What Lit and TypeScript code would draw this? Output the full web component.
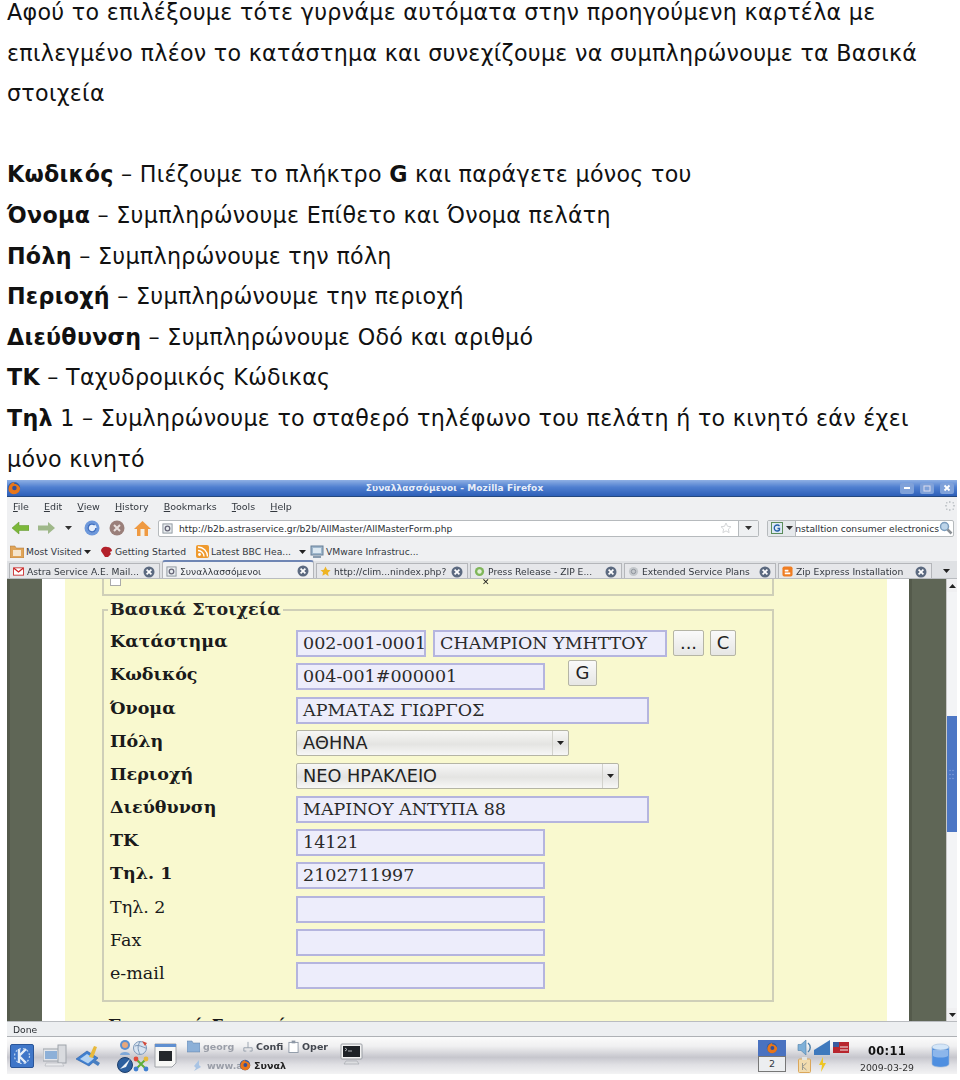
import { LitElement, html, css, svg } from "lit";
import { customElement } from "lit/decorators.js";

const closeIcon = html`<svg class="x" viewBox="0 0 12 12"><circle cx="6" cy="6" r="5.5" fill="#5c6a80"/><path d="M3.6 3.6l4.8 4.8M8.4 3.6l-4.8 4.8" stroke="#fff" stroke-width="1.7"/></svg>`;
const pageIcon = html`<svg class="fav" viewBox="0 0 12 12"><rect x="1" y="1" width="10" height="10" fill="#e8ecef" stroke="#8a929a"/><circle cx="6" cy="6" r="2.5" fill="none" stroke="#667" stroke-width="1.4"/></svg>`;
const firefox = (s: number) => html`<svg width=${s} height=${s} viewBox="0 0 16 16"><circle cx="8" cy="8" r="7" fill="#2a5aa8"/><path d="M2 11C1 6 4 2 9 1c-1 1-1 2-1 2 3 0 6 2 7 5 0 4-3 7-7 7-3 0-5-2-6-4z" fill="#e8761a"/><circle cx="8.5" cy="8" r="2.6" fill="#33509a"/></svg>`;

const tabs = [
  { w: 151, label: "Astra Service A.E. Mail...", fav: html`<svg class="fav" viewBox="0 0 12 12"><rect x=".5" y="2" width="11" height="8" fill="#fff" stroke="#c33"/><path d="M1 2.5l5 4 5-4" fill="none" stroke="#c22" stroke-width="1.4"/></svg>` },
  { w: 152, label: "Συναλλασσόμενοι", fav: pageIcon, active: true },
  { w: 152, label: "http://clim...nindex.php?", fav: html`<svg class="fav" viewBox="0 0 12 12"><path d="M6 .5l1.7 3.6 3.8.5-2.8 2.7.7 3.9L6 8.8l-3.4 1.9.7-3.9L.5 4.6l3.8-.5z" fill="#eeb422"/></svg>` },
  { w: 152, label: "Press Release - ZIP E...", fav: html`<svg class="fav" viewBox="0 0 12 12"><circle cx="6" cy="6" r="5" fill="#7fb65a"/><circle cx="6" cy="6" r="2.4" fill="#e4efd8"/></svg>` },
  { w: 152, label: "Extended Service Plans", fav: html`<svg class="fav" viewBox="0 0 12 12"><circle cx="6" cy="6" r="5" fill="#c4c8cc"/><circle cx="6" cy="6" r="2.4" fill="none" stroke="#8b9198"/></svg>` },
  { w: 154, label: "Zip Express Installation", fav: html`<svg class="fav" viewBox="0 0 12 12"><rect x=".5" y=".5" width="11" height="11" rx="2" fill="#ef7d22"/><path d="M3 7h6v2H3zM3 4h4v2H3z" fill="#fff"/></svg>` },
];

const fields: any[] = [
  { label: "Κατάστημα", bold: true, kind: "store" },
  { label: "Κωδικός", bold: true, kind: "code" },
  { label: "Όνομα", bold: true, kind: "input", value: "ΑΡΜΑΤΑΣ ΓΙΩΡΓΟΣ", w: 353 },
  { label: "Πόλη", bold: true, kind: "select", value: "ΑΘΗΝΑ", w: 273 },
  { label: "Περιοχή", bold: true, kind: "select", value: "ΝΕΟ ΗΡΑΚΛΕΙΟ", w: 323 },
  { label: "Διεύθυνση", bold: true, kind: "input", value: "ΜΑΡΙΝΟΥ ΑΝΤΥΠΑ 88", w: 353 },
  { label: "ΤΚ", bold: true, kind: "input", value: "14121", w: 249 },
  { label: "Τηλ. 1", bold: true, kind: "input", value: "2102711997", w: 249 },
  { label: "Τηλ. 2", kind: "input", value: "", w: 249 },
  { label: "Fax", kind: "input", value: "", w: 249 },
  { label: "e-mail", kind: "input", value: "", w: 249 },
];

@customElement("app-root")
export class AppRoot extends LitElement {
  static styles = css`
    :host { display: block; width: 960px; height: 1080px; background: #fff; overflow: hidden; font-family: "DejaVu Sans", sans-serif; color: #111; }
    .doc { margin: -8px 3px 0 7px; font-size: 22.2px; line-height: 40.6px; letter-spacing: .3px; }
    .doc p { margin: 0; }
    .doc .gap { height: 40.6px; }
    .win { margin: 1px 3px 0 7px; width: 950px; filter: blur(.5px); font-size: 9.2px; color: #33383f; }
    .title { height: 17px; background: linear-gradient(#8fb0e4, #4f7fd0 45%, #2d5fb8); display: flex; align-items: center; padding: 0 3px 0 0; color: #e8eef8; font-weight: 700; border-bottom: 1px solid #24487f; box-sizing: border-box; }
    .title .ttl { flex: 1; text-align: center; padding-right: 6px; letter-spacing: .1px; font-size: 9px; }
    .wbtn { width: 14px; height: 11px; margin-left: 6px; background: #7fa1d9; border-radius: 2px; display: flex; align-items: center; justify-content: center; }
    .chrome { background: #eff0f2; }
    .menu { height: 19px; display: flex; align-items: center; gap: 15px; padding-left: 6px; position: relative; font-size: 9.5px; }
    .menu span::first-letter { text-decoration: underline; }
    .loader { position: absolute; right: 2px; top: 4px; }
    .nav { height: 24px; display: flex; align-items: center; padding-left: 5px; }
    .nav svg { flex: none; }
    .url { margin-left: 7px; width: 601px; height: 17px; box-sizing: border-box; background: #fff; border: 1px solid #b6babd; border-radius: 2px; display: flex; align-items: center; gap: 6px; padding-left: 3px; color: #2a2e33; }
    .url .sp { flex: 1; }
    .url .drop { width: 19px; align-self: stretch; border-left: 1px solid #b6babd; background: #eef0f2; display: flex; align-items: center; justify-content: center; }
    .search { margin-left: 8px; width: 187px; height: 17px; box-sizing: border-box; background: #fff; border: 1px solid #b6babd; border-radius: 2px; display: flex; align-items: center; overflow: hidden; color: #2a2e33; white-space: nowrap; }
    .search .eng { width: 28px; flex: none; align-self: stretch; background: #e6e9ec; border-right: 1px solid #b6babd; display: flex; align-items: center; gap: 3px; padding-left: 3px; box-sizing: border-box; }
    .search .q { flex: 1; overflow: hidden; direction: rtl; text-align: left; }
    .marks { height: 21px; display: flex; align-items: center; padding: 2px 0 0 3px; box-sizing: border-box; white-space: nowrap; }
    .mark { display: flex; align-items: center; gap: 2px; flex: none; }
    .tabs { height: 18px; display: flex; align-items: flex-end; padding-left: 2px; gap: 2px; background: #dfe1e4; border-bottom: 1px solid #b9bcc0; box-sizing: border-box; position: relative; }
    .tab { box-sizing: border-box; height: 15px; display: flex; align-items: center; gap: 3px; padding: 1px 4px 0 3px; background: #e6e7ea; border: 1px solid #b4b6ba; border-bottom: 0; white-space: nowrap; overflow: hidden; flex: none; }
    .tab.active { height: 18px; padding-top: 2px; background: #f0f1f3; border-top: 2px solid #6f86b4; border-radius: 3px 3px 0 0; }
    .tab .lbl { flex: 1; overflow: hidden; }
    .fav { width: 11px; height: 11px; flex: none; }
    .x { width: 12px; height: 12px; flex: none; }
    .tabmore { margin-left: 9px; align-self: center; }
    .content { height: 442px; overflow: hidden; display: flex; }
    .dark { background: #5f6656; border-left: 3px solid #545a4b; box-sizing: border-box; flex: none; }
    .gutter { background: #fff; flex: none; }
    .page { flex: none; width: 822px; background: #f9f9cf; padding: 0 37px; box-sizing: border-box; font-family: "DejaVu Serif", serif; color: #1a1a1a; }
    .prev { height: 17px; border: 2px solid #cfcfb8; border-top: 0; width: 672px; box-sizing: border-box; position: relative; }
    .chk { position: absolute; left: 6px; top: 0; width: 9px; height: 6px; background: #fff; border: 1px solid #aaa; border-top: 0; }
    .tiny { position: absolute; left: 378px; top: 0; line-height: 6px; font: 700 9px/6px "DejaVu Sans", sans-serif; }
    fieldset { margin: 3px 0 0; padding: 10px 0 5px 6px; width: 672px; box-sizing: border-box; border: 2px solid #cfcfb8; min-inline-size: 0; }
    legend { font-size: 17.5px; font-weight: 700; padding: 0 2px; margin-left: -2px; line-height: 21px; color: #222; }
    .row { display: grid; grid-template-columns: 186px 1fr; height: 33.2px; align-items: flex-start; }
    .lab { font-size: 17.5px; line-height: 22px; }
    .lab.b { font-weight: 700; }
    .ctl { display: flex; gap: 7px; align-items: flex-start; }
    .inp { box-sizing: border-box; height: 27px; background: #ededfb; border: 2px solid #b5b5de; padding: 0 5px; font-size: 17.5px; line-height: 23px; white-space: nowrap; overflow: hidden; color: #2a2a2a; flex: none; }
    .btn { box-sizing: border-box; height: 26px; border: 1px solid #b5b5a5; border-radius: 2px; background: linear-gradient(#fafafa, #e6e6e4); font: 18px/23px "DejaVu Sans", sans-serif; text-align: center; color: #222; flex: none; }
    .sel { box-sizing: border-box; height: 26px; border: 1px solid #b5b5a5; border-radius: 2px; background: linear-gradient(#f7f7f6, #e4e4e2 55%, #f7f7f6); font: 17.7px/24px "DejaVu Sans", sans-serif; display: flex; color: #222; flex: none; padding-left: 6px; }
    .sel .t { flex: 1; }
    .sel .a { width: 15px; border-left: 1px solid #d2d2cc; display: flex; align-items: center; justify-content: center; }
    .next { margin: 12px 0 0 6px; font-size: 17.5px; font-weight: 700; white-space: nowrap; line-height: 22px; }
    .sb { width: 11px; flex: none; background: #f3f4f6; border-left: 1px solid #c8c8c8; box-sizing: border-box; display: flex; flex-direction: column; }
    .sb .arr { height: 13px; display: flex; align-items: center; justify-content: center; background: #f0f0f2; }
    .sb .up { height: 124px; flex: none; }
    .sb .thumb { height: 116px; background: #4c76c4; flex: none; display: flex; align-items: center; justify-content: center; }
    .sb .down { flex: 1; }
    .status { height: 16px; background: #edeff1; border-top: 1px solid #b9bcc0; border-bottom: 1px solid #aeb1b5; display: flex; align-items: center; padding: 1px 0 0 6px; box-sizing: border-box; color: #2a2e33; }
    .bar { height: 37px; display: flex; align-items: center; background: linear-gradient(#fbfbfb, #f0f0f1 25%, #c6c6cd 55%, #e0e0e4 75%, #f3f3f4); position: relative; }
    .bar svg { flex: none; }
    .grid2 { display: grid; grid-template-columns: 16px 16px; gap: 0; margin-left: 15px; }
    .tasks { display: grid; grid-template-columns: 56px 45px 42px; height: 37px; margin-left: 10px; font-size: 9.5px; align-items: center; width: 143px; font-weight: 700; }
    .task { display: flex; align-items: center; gap: 3px; overflow: hidden; white-space: nowrap; }
    .dim { color: #9a9ea8; }
    .mid { color: #43474f; }
    .sp { flex: 1; }
    .pager { width: 28px; display: flex; flex-direction: column; margin-right: 10px; }
    .pager .top { height: 16px; background: #4a72c0; display: flex; align-items: center; justify-content: center; }
    .pager .bot { height: 16px; border: 1px solid #777; box-sizing: border-box; background: #eceef0; font-size: 9.5px; text-align: center; line-height: 14px; }
    .tray { display: grid; grid-template-columns: 16px 18px 17px; gap: 1px 1px; align-items: center; justify-items: center; }
    .clock { width: 62px; margin: 4px 0 0 7px; text-align: center; color: #111; }
    .clock .h { font-size: 11.5px; font-weight: 700; line-height: 20px; letter-spacing: .3px; }
    .clock .d { font-size: 9.3px; line-height: 14px; color: #333; }
    .can { margin: 0 7px 0 13px; }
  `;

  private arrowDown(c = "#222") {
    return html`<svg width="7" height="4" viewBox="0 0 7 4"><path d="M0 0h7L3.5 4z" fill=${c}/></svg>`;
  }

  private renderDoc() {
    return html`<div class="doc">
      <p>Αφού το επιλέξουμε τότε γυρνάμε αυτόματα στην προηγούμενη καρτέλα με επιλεγμένο πλέον το κατάστημα και συνεχίζουμε να συμπληρώνουμε τα Βασικά στοιχεία</p>
      <div class="gap"></div>
      <p><b>Κωδικός</b> – Πιέζουμε το πλήκτρο <b>G</b> και παράγετε μόνος του</p>
      <p><b>Όνομα</b> – Συμπληρώνουμε Επίθετο και Όνομα πελάτη</p>
      <p><b>Πόλη</b> – Συμπληρώνουμε την πόλη</p>
      <p><b>Περιοχή</b> – Συμπληρώνουμε την περιοχή</p>
      <p><b>Διεύθυνση</b> – Συμπληρώνουμε Οδό και αριθμό</p>
      <p><b>ΤΚ</b> – Ταχυδρομικός Κώδικας</p>
      <p><b>Τηλ</b> 1 – Συμληρώνουμε το σταθερό τηλέφωνο του πελάτη ή το κινητό εάν έχει μόνο κινητό</p>
    </div>`;
  }

  private renderChrome() {
    return html`
      <div class="title">
        ${firefox(14)}
        <span class="ttl">Συναλλασσόμενοι - Mozilla Firefox</span>
        <span class="wbtn"><svg width="8" height="8" viewBox="0 0 8 8"><path d="M1 4h6" stroke="#fff" stroke-width="2"/></svg></span>
        <span class="wbtn"><svg width="8" height="8" viewBox="0 0 8 8"><rect x="1" y="2" width="6" height="5" fill="none" stroke="#dde" /></svg></span>
        <span class="wbtn"><svg width="8" height="8" viewBox="0 0 8 8"><path d="M1.5 1.5l5 5M6.5 1.5l-5 5" stroke="#fff" stroke-width="1.8"/></svg></span>
      </div>
      <div class="chrome">
        <div class="menu">
          <span>File</span><span>Edit</span><span>View</span><span>History</span><span>Bookmarks</span><span>Tools</span><span>Help</span>
          <svg class="loader" width="10" height="10" viewBox="0 0 10 10"><g fill="#c4c8cc"><rect x="4" y="0" width="1.5" height="2"/><rect x="4" y="8" width="1.5" height="2"/><rect x="0" y="4" width="2" height="1.5"/><rect x="8" y="4" width="2" height="1.5"/><rect x="1" y="1" width="1.5" height="1.5"/><rect x="7.5" y="1" width="1.5" height="1.5"/><rect x="1" y="7.5" width="1.5" height="1.5"/><rect x="7.5" y="7.5" width="1.5" height="1.5"/></g></svg>
        </div>
        <div class="nav">
          <svg width="17" height="14" viewBox="0 0 17 14" style="margin-right:9px"><path d="M0 7l7-6v3.5h10v5H7V13z" fill="#7cb83a" stroke="#5c9326" stroke-width=".5"/></svg>
          <svg width="17" height="14" viewBox="0 0 17 14" style="margin-right:10px"><path d="M17 7l-7-6v3.5H0v5h10V13z" fill="#9fb88a"/></svg>
          ${this.arrowDown("#333")}
          <svg width="16" height="16" viewBox="0 0 16 16" style="margin:0 9px 0 12px"><circle cx="8" cy="8" r="7.5" fill="#6d98db"/><circle cx="8" cy="8" r="4.6" fill="#e8f0fb"/><path d="M12 8a4 4 0 1 1-1.3-3" fill="none" stroke="#3f6fc0" stroke-width="1.6"/></svg>
          <svg width="16" height="16" viewBox="0 0 16 16" style="margin-right:9px"><circle cx="8" cy="8" r="7.5" fill="#9a7f7a"/><path d="M5 5l6 6M11 5l-6 6" stroke="#e8dfdc" stroke-width="2"/></svg>
          <svg width="17" height="17" viewBox="0 0 17 17"><path d="M8.5 1L0 9h3v7h11V9h3z" fill="#ef9a42"/><rect x="6.5" y="9" width="4" height="7" fill="#f5f0e6"/></svg>
          <div class="url">
            ${pageIcon}
            <span>http://b2b.astraservice.gr/b2b/AllMaster/AllMasterForm.php</span>
            <span class="sp"></span>
            <svg width="12" height="12" viewBox="0 0 12 12"><path d="M6 1l1.5 3.3 3.5.4-2.6 2.4.7 3.5L6 8.9 2.900 10.600l.7-3.500L1 4.700l3.500-.4z" fill="#fff" stroke="#d4d6d8"/></svg>
            <span class="drop">${this.arrowDown("#333")}</span>
          </div>
          <div class="search">
            <span class="eng"><svg width="12" height="12" viewBox="0 0 12 12"><rect x=".5" y=".5" width="11" height="11" fill="#dce9f4" stroke="#5b8c5a"/><path d="M8.500 4a3 3 0 1 0 0 4V6.500H6.500" fill="none" stroke="#245ea8" stroke-width="1.300"/></svg>${this.arrowDown("#333")}</span>
            <span class="q">installtion consumer electronics</span>
            <svg width="14" height="14" viewBox="0 0 14 14"><circle cx="5.500" cy="5.500" r="4" fill="#bcd4ea" stroke="#7c9dbd" stroke-width="1.500"/><path d="M8.500 8.500l4 4" stroke="#8a8f95" stroke-width="2.500"/></svg>
          </div>
        </div>
        <div class="marks">
          <span class="mark" style="width:90px"><svg width="14" height="13" viewBox="0 0 14 13"><path d="M0 1h5l1 2h8v10H0z" fill="#e0a458" stroke="#a8773a" stroke-width=".5"/><rect x="3" y="5" width="8" height="6" fill="#f5e4cb"/></svg>Most Visited ${this.arrowDown()}</span>
          <span class="mark" style="width:96px"><svg width="13" height="12" viewBox="0 0 13 12"><path d="M1 5c0-3 3-5 6-4 3 0 5 2 5 4l-2 1 1 2-3 3H5L3 8z" fill="#b3202a"/></svg>Getting Started</span>
          <span class="mark" style="width:114px"><svg width="13" height="13" viewBox="0 0 13 13"><rect width="13" height="13" rx="2" fill="#ef9a2e"/><circle cx="3.500" cy="9.500" r="1.400" fill="#fff"/><path d="M2 5.500a6 6 0 0 1 6 6M2 2a9.500 9.500 0 0 1 9.500 9.500" fill="none" stroke="#fff" stroke-width="1.300"/></svg>Latest BBC Hea... &nbsp;${this.arrowDown()}</span>
          <span class="mark"><svg width="14" height="13" viewBox="0 0 14 13"><rect x="1" y="1" width="12" height="9" fill="#9fb7cc" stroke="#667f97"/><rect x="3" y="3" width="8" height="5" fill="#dce8f1"/><path d="M3 12h8" stroke="#667f97" stroke-width="1.500"/></svg>VMware Infrastruc...</span>
        </div>
        <div class="tabs">
          ${tabs.map(t => html`<div class="tab ${t.active ? "active" : ""}" style="width:${t.w}px">${t.fav}<span class="lbl">${t.label}</span>${closeIcon}</div>`)}
          <span class="tabmore">${this.arrowDown()}</span>
        </div>
      </div>`;
  }

  private renderField(f: any) {
    let ctl;
    if (f.kind === "store") {
      ctl = html`<div class="inp" style="width:130px">002-001-0001</div><div class="inp" style="width:234px">CHAMPION ΥΜΗΤΤΟΥ</div><div class="btn" style="width:31px;margin-left:-1px">...</div><div class="btn" style="width:26px;margin-left:-1px">C</div>`;
    } else if (f.kind === "code") {
      ctl = html`<div class="inp" style="width:249px">004-001#000001</div><div class="btn" style="width:29px;margin:-3px 0 0 16px">G</div>`;
    } else if (f.kind === "select") {
      ctl = html`<div class="sel" style="width:${f.w}px"><span class="t">${f.value}</span><span class="a">${this.arrowDown()}</span></div>`;
    } else {
      ctl = html`<div class="inp" style="width:${f.w}px">${f.value}</div>`;
    }
    return html`<div class="row"><span class="lab ${f.bold ? "b" : ""}">${f.label}</span><div class="ctl">${ctl}</div></div>`;
  }

  private renderContent() {
    return html`<div class="content">
      <div class="dark" style="width:35px"></div>
      <div class="gutter" style="width:23px"></div>
      <div class="page">
        <div class="prev"><span class="chk"></span><span class="tiny">✕</span></div>
        <fieldset>
          <legend>Βασικά Στοιχεία</legend>
          ${fields.map(f => this.renderField(f))}
        </fieldset>
        <div class="next">Εμπορικά Στοιχεία</div>
      </div>
      <div class="gutter" style="width:22px"></div>
      <div class="dark" style="width:37px"></div>
      <div class="sb">
        <div class="arr"><svg width="7" height="4" viewBox="0 0 7 4"><path d="M0 4h7L3.500 0z" fill="#222"/></svg></div>
        <div class="up"></div>
        <div class="thumb"><svg width="7" height="11" viewBox="0 0 7 11"><g fill="#7d9cd8"><circle cx="1" cy="1.500" r=".8"/><circle cx="4" cy="1.500" r=".8"/><circle cx="1" cy="5.500" r=".8"/><circle cx="4" cy="5.500" r=".8"/><circle cx="1" cy="9.500" r=".8"/><circle cx="4" cy="9.500" r=".8"/></g></svg></div>
        <div class="down"></div>
        <div class="arr">${this.arrowDown()}</div>
      </div>
    </div>`;
  }

  private renderBar() {
    const monitor = svg`<rect x="1" y="1" width="21" height="15" rx="1" fill="#f2f2f2" stroke="#9a9ea4"/><rect x="3" y="3" width="17" height="11" fill="#1d2126"/><path d="M5 5l2 1.500L5 8M8 8h4" stroke="#cfd4d8" fill="none" stroke-width=".8"/><path d="M6 18h11l2 3H4z" fill="#dcdde0" stroke="#a0a3a8" stroke-width=".6"/>`;
    return html`<div class="bar">
      <svg width="24" height="24" viewBox="0 0 24 24" style="margin-left:3px"><rect x=".5" y=".5" width="23" height="23" rx="1.500" fill="#3f76c8" stroke="#2a5598"/><path d="M9 5v14M9 12l7-7M9 12l7 7" stroke="#e6eef8" stroke-width="2.400" fill="none"/><circle cx="12" cy="12" r="7.500" fill="none" stroke="#bcd2ee" stroke-width="1.200" stroke-dasharray="2 2"/></svg>
      <svg width="24" height="23" viewBox="0 0 24 23" style="margin-left:9px"><rect x="0" y="5" width="16" height="12" fill="#e4e6ea" stroke="#9ea3aa"/><rect x="2" y="7" width="12" height="8" fill="#8db0d8"/><rect x="15" y="1" width="8" height="18" fill="#d9dbdf" stroke="#9ea3aa"/><path d="M3 19h16l2 3H2z" fill="#e8e9ec" stroke="#b0b3b8" stroke-width=".6"/></svg>
      <svg width="26" height="24" viewBox="0 0 26 24" style="margin-left:9px"><path d="M0 15l11-8 11 7-9 8z" fill="#3f7fd0" stroke="#2a5fa8" stroke-width=".6"/><path d="M4 15l7-5 7 4.500-6 5z" fill="#b4d3f2"/><path d="M13 13L18 2l3 1-4 11z" fill="#e8b93c"/><path d="M18 15l6 4-2 3-6-4z" fill="#4a7fc0"/></svg>
      <div class="grid2">
        <svg width="16" height="17" viewBox="0 0 16 17"><circle cx="8" cy="6" r="5" fill="#5b8fd0"/><circle cx="8" cy="6" r="3" fill="#e8a77c"/><path d="M3 16c0-4 10-4 10 0z" fill="#7fa8d8"/></svg>
        <svg width="16" height="17" viewBox="0 0 16 17"><circle cx="7" cy="9" r="6.500" fill="#d8e3f0" stroke="#7b97b8"/><path d="M2 7c5-2 10 3 12 2M7 3c-3 4-2 9 0 12" fill="none" stroke="#7b97b8"/><path d="M9 2l5 2-2 3z" fill="#d34a3c"/></svg>
        <svg width="16" height="17" viewBox="0 0 16 17"><circle cx="8" cy="9" r="7.500" fill="#2d5f9e" stroke="#1e3f6c"/><path d="M3 13L13 3 9 11z" fill="#f0f4f8"/></svg>
        <svg width="16" height="17" viewBox="0 0 16 17"><path d="M3 3l10 10M13 3L3 13" stroke="#5fae3a" stroke-width="2"/><circle cx="3" cy="3" r="2.400" fill="#e04a3a"/><circle cx="13" cy="3" r="2.400" fill="#e8b93c"/><circle cx="3" cy="13" r="2.400" fill="#3f7fd0"/><circle cx="13" cy="13" r="2.400" fill="#3f7fd0"/></svg>
      </div>
      <svg width="23" height="25" viewBox="0 0 23 25" style="margin-left:5px"><path d="M1 1h21v19l-4 4H1z" fill="#f7f7f5" stroke="#a0a3a8"/><rect x="1" y="1" width="21" height="3" fill="#5f8fd0"/><rect x="5" y="8" width="13" height="10" fill="#25282c"/></svg>
      <div class="tasks">
        <span class="task dim"><svg width="13" height="13" viewBox="0 0 13 13"><path d="M0 1h5l1 2h7v9H0z" fill="#8cb0d8" stroke="#5d7fa6" stroke-width=".5"/></svg>georg</span>
        <span class="task mid"><svg width="10" height="13" viewBox="0 0 12 13"><path d="M6 1v4M1 12V8h10v4M1 12h3M8 12h3M6 5v3" fill="none" stroke="#8d97a5"/></svg>Confi</span>
        <span class="task mid"><svg width="11" height="14" viewBox="0 0 12 14"><rect x="1" y="2" width="10" height="11" fill="#fff" stroke="#8d97a5"/><rect x="4" y="0" width="4" height="3" fill="#8d97a5"/></svg>Oper</span>
        <span class="task dim"><svg width="13" height="13" viewBox="0 0 13 13" style="margin-left:4px"><path d="M8 1L3 7l2 2-2 3 7-4-2-2z" fill="#a9c4e4"/></svg>www.a</span>
        <span class="task mid" style="grid-column: span 2;color:#222;margin-left:-4px">${firefox(12)}Συναλ</span>
      </div>
      <svg width="23" height="25" viewBox="0 0 23 25" style="margin-left:10px">${monitor}</svg>
      <span class="sp"></span>
      <div class="pager">
        <div class="top">${firefox(12)}</div>
        <div class="bot">2</div>
      </div>
      <div class="tray">
        <svg width="15" height="17" viewBox="0 0 15 17"><path d="M1 5.500h3l5-4.500v15l-5-4.500H1z" fill="#7fb0d8" stroke="#4d7fa8" stroke-width=".6"/><path d="M11 4c3 2.500 3 6.500 0 9" fill="none" stroke="#4d7fa8" stroke-width="1.400"/></svg>
        <svg width="16" height="15" viewBox="0 0 16 15"><path d="M0 15V10L16 0v15z" fill="#3f79bd"/></svg>
        <svg width="16" height="11" viewBox="0 0 16 11"><rect width="16" height="11" fill="#b8262e"/><rect width="6" height="5" fill="#3a5a9e"/><path d="M7 5h8M7 8h8" stroke="#eee"/></svg>
        <svg width="13" height="16" viewBox="0 0 13 16"><rect x=".5" y="2" width="12" height="13.500" rx="1" fill="#f2dcae" stroke="#dba75a"/><rect x="4" y="0" width="5" height="3" fill="#e4e4e0"/><path d="M4.500 6v7M8.500 6l-4 3.500 4 3.500" fill="none" stroke="#9a9a90"/></svg>
        <svg width="7" height="15" viewBox="0 0 7 15"><path d="M4 0L0 8h3l-1 7 5-9H4z" fill="#eec624"/></svg>
        <span></span>
      </div>
      <div class="clock"><div class="h">00:11</div><div class="d">2009-03-29</div></div>
      <svg class="can" width="19" height="25" viewBox="0 0 19 25"><path d="M1 4v17c0 4 17 4 17 0V4z" fill="#4f8fe0" stroke="#9db8d8" stroke-width=".6"/><ellipse cx="9.500" cy="4" rx="8.500" ry="3" fill="#d4e6f8" stroke="#9db8d8" stroke-width=".6"/><path d="M2 7v6c3 2 12 2 15 0V7" fill="#fff" opacity=".35"/></svg>
    </div>`;
  }

  render() {
    return html`${this.renderDoc()}
      <div class="win">
        ${this.renderChrome()}
        ${this.renderContent()}
        <div class="status">Done</div>
        ${this.renderBar()}
      </div>`;
  }
}
